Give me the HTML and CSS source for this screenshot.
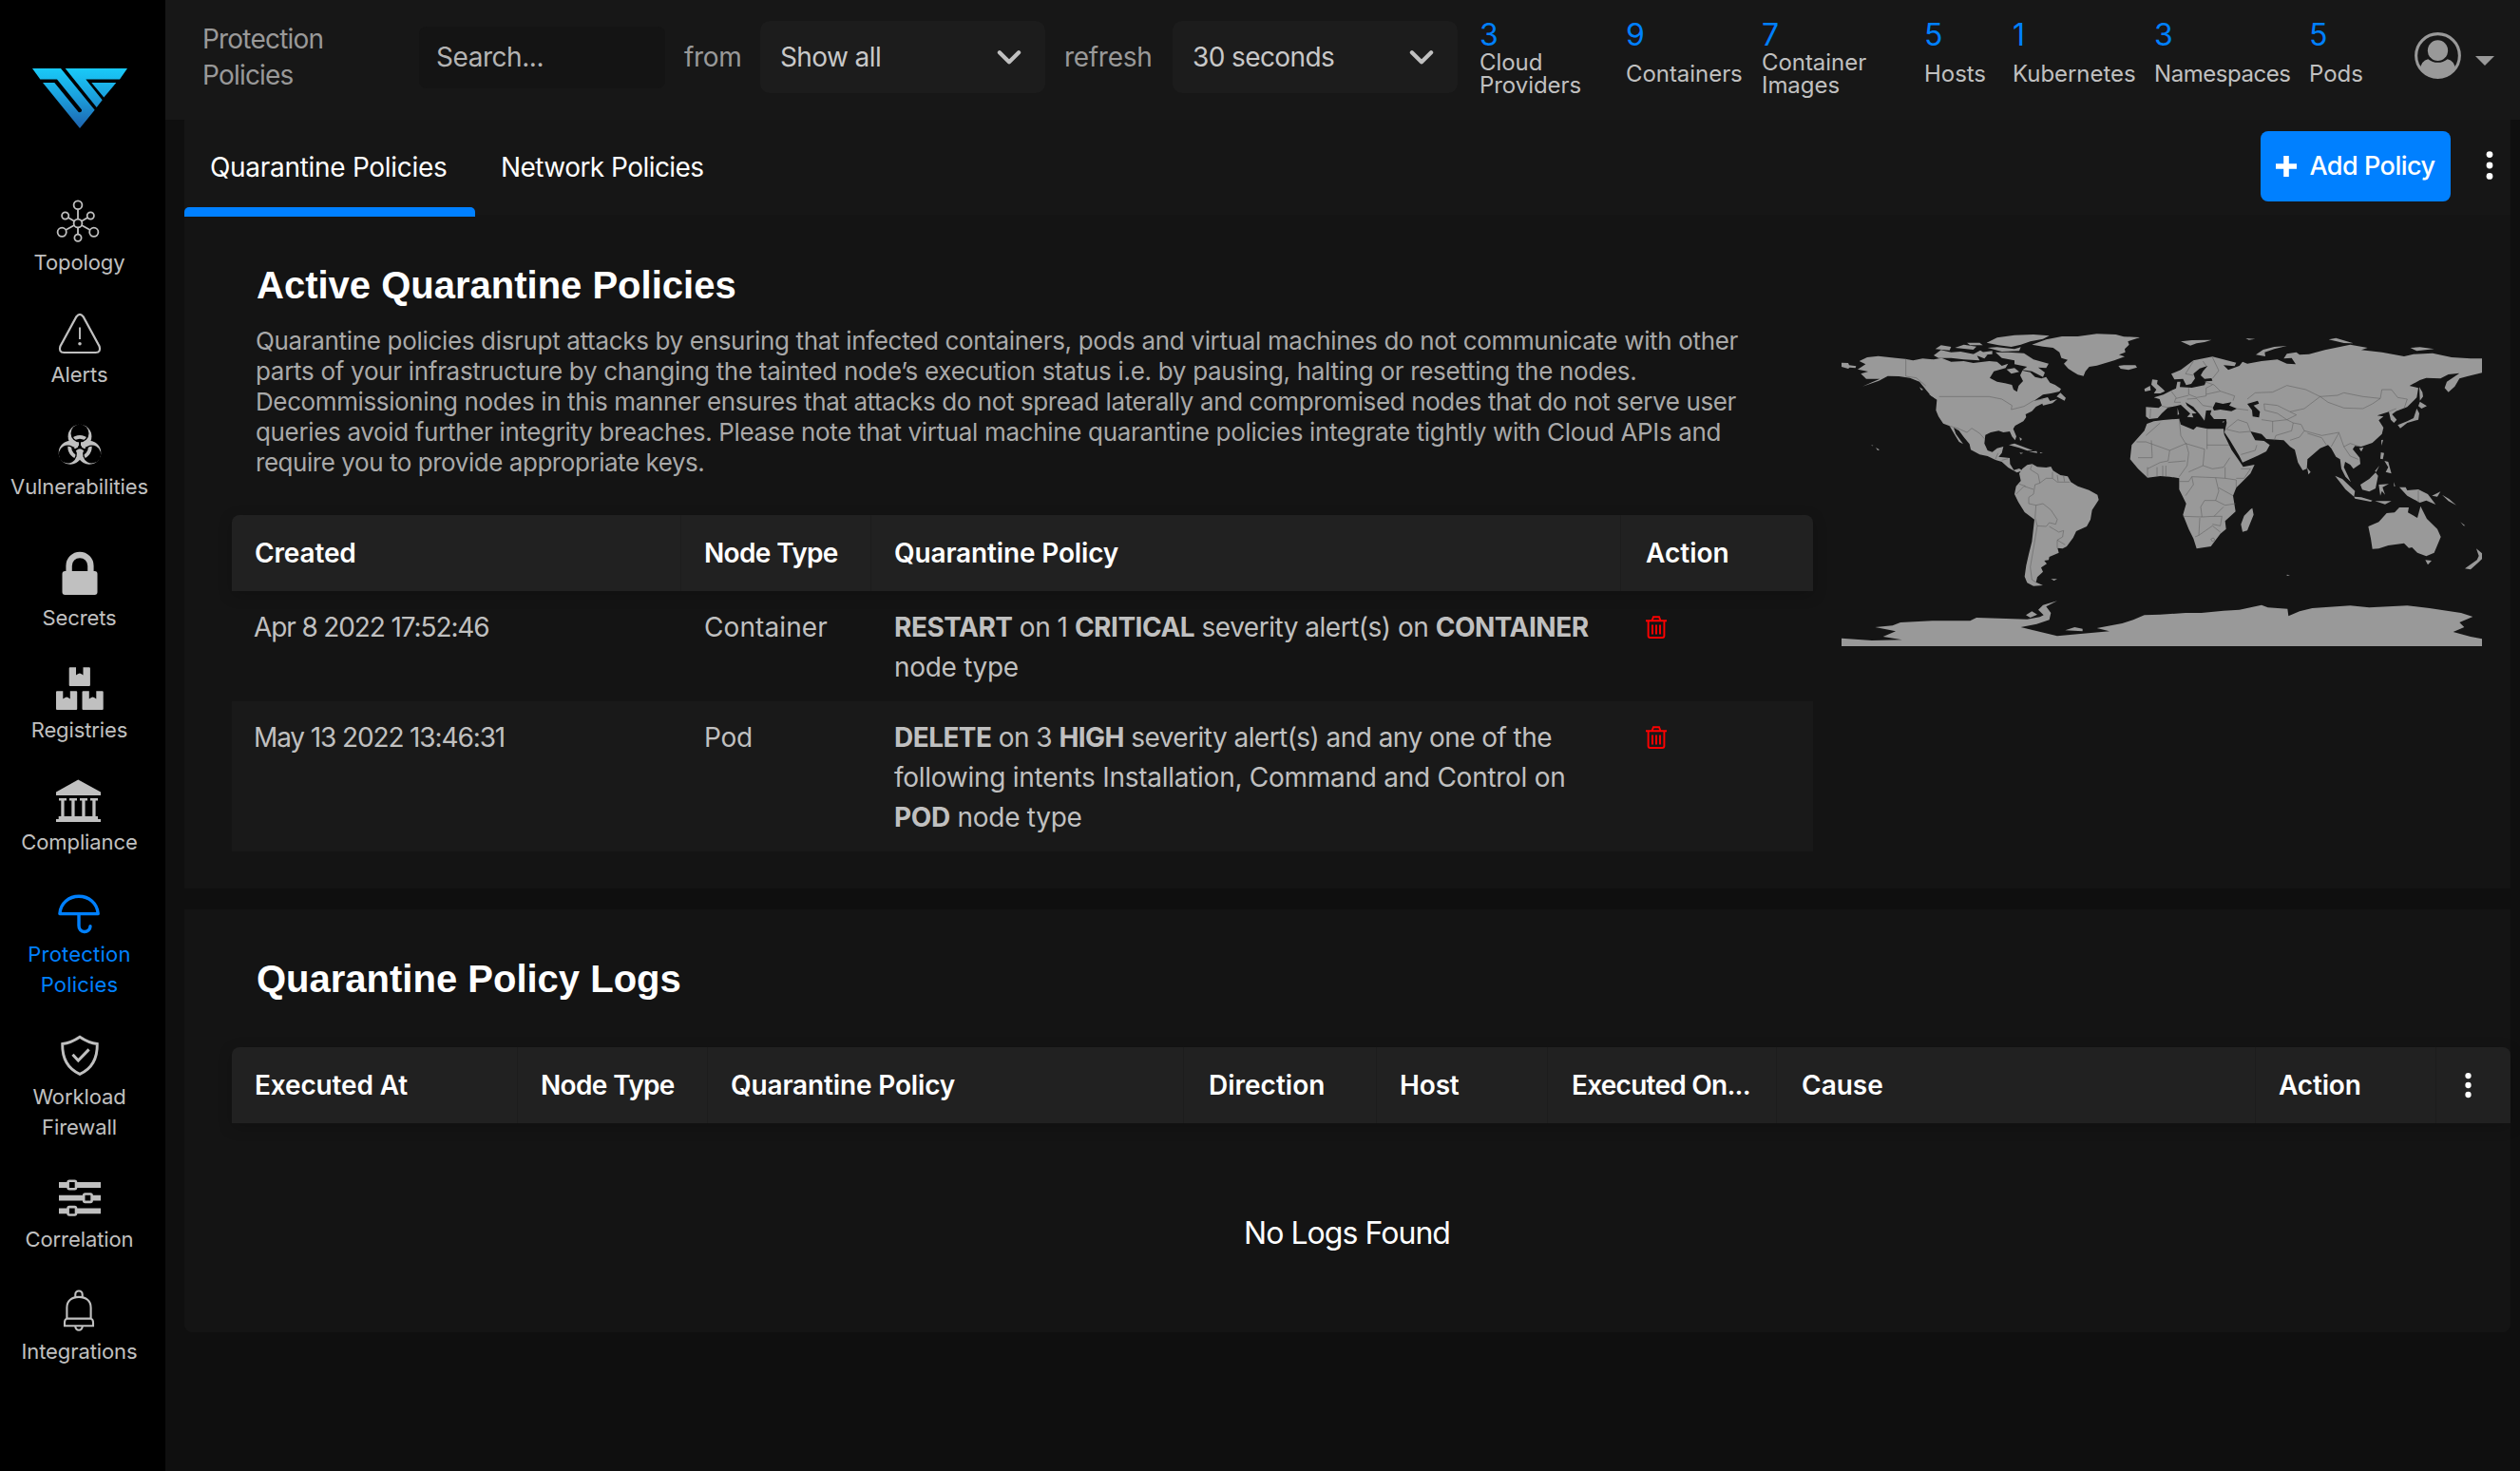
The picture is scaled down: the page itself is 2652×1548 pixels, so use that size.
FILE: index.html
```html
<!DOCTYPE html>
<html lang="en">
<head>
<meta charset="utf-8">
<title>Protection Policies</title>
<link rel="stylesheet" href="styles.css">
</head>
<body>
<div class="app">
  <nav class="sidebar">
    <svg class="logo" viewBox="102 97 300 190" preserveAspectRatio="none">
      <defs><linearGradient id="brand" gradientUnits="userSpaceOnUse" x1="0" y1="97" x2="0" y2="287"><stop offset="0" stop-color="#19caf8"/><stop offset=".45" stop-color="#1ba3df"/><stop offset="1" stop-color="#1e63ae"/></linearGradient></defs>
      <g fill="url(#brand)">
        <path d="M102 97H192L299 229L252 287L135 142H172L248 236Q259 238 258 228L180 132H127Z"/>
        <path d="M206 97H402L378 132H271L323 197L305 221Z"/>
        <path d="M289 142H367L328 189Z"/>
      </g>
    </svg>
    <a class="item"><svg class="icon" viewBox="0 0 44 44"><g fill="none" stroke="currentColor" stroke-width="1.8"><circle cx="21" cy="4.8" r="4.4"/><circle cx="21" cy="24" r="4.4"/><circle cx="7.7" cy="16" r="3.6"/><circle cx="34.3" cy="16" r="3.6"/><circle cx="4.2" cy="33.3" r="4.6"/><circle cx="37.8" cy="33.3" r="4.6"/><circle cx="21" cy="39.3" r="3.6"/><path d="M21 9.2V19.6M21 28.4V35.7M10.8 17.9L17.2 21.8M31.2 17.9L24.8 21.8M8.2 31L17.2 26M33.8 31L24.8 26"/></g></svg><span>Topology</span></a>
    <a class="item"><svg class="icon" viewBox="0 0 44 44"><path d="M18.4 4.2Q22 -.4 25.6 4.2L42.6 35.4Q44.6 41.8 38.6 42H5.4Q-.6 41.8 1.4 35.4Z" fill="none" stroke="currentColor" stroke-width="2.2"/><path d="M22 15.5V28" stroke="currentColor" stroke-width="1.9"/><circle cx="22" cy="32.8" r="1.8" fill="currentColor"/></svg><span>Alerts</span></a>
    <a class="item"><svg class="icon" viewBox="-22 -23.6 44 44">
      <defs>
        <g id="holes"><circle cy="-14.6" r="9.5"/><circle cy="-14.6" r="9.5" transform="rotate(120)"/><circle cy="-14.6" r="9.5" transform="rotate(240)"/></g>
        <clipPath id="inner"><circle cy="-14.6" r="8.2"/><circle cy="-14.6" r="8.2" transform="rotate(120)"/><circle cy="-14.6" r="8.2" transform="rotate(240)"/></clipPath>
        <mask id="cut" maskUnits="userSpaceOnUse" x="-26" y="-26" width="52" height="52"><rect x="-26" y="-26" width="52" height="52" fill="#fff"/><use href="#holes" fill="#000"/><circle r="2" fill="#000"/><path id="slit" d="M0-26V-20M0-8V0" stroke="#000" stroke-width="2"/><use href="#slit" transform="rotate(120)"/><use href="#slit" transform="rotate(240)"/></mask>
      </defs>
      <g fill="currentColor" mask="url(#cut)"><circle cy="-11.4" r="12.4"/><circle cy="-11.4" r="12.4" transform="rotate(120)"/><circle cy="-11.4" r="12.4" transform="rotate(240)"/></g>
      <circle r="10.8" fill="none" stroke="currentColor" stroke-width="3.8" clip-path="url(#inner)"/>
    </svg><span>Vulnerabilities</span></a>
    <a class="item item-split"><svg class="icon" viewBox="0 0 44 44"><rect x="3.5" y="16" width="37" height="25" rx="3" fill="currentColor"/><path d="M10.6 18V10.4a11.4 11.4 0 0 1 22.8 0V18" fill="none" stroke="currentColor" stroke-width="6.4"/></svg><span>Secrets</span></a>
    <a class="item"><svg class="icon" viewBox="0 0 44 44"><defs><path id="box" d="M1 0H7.3V8.3L9.2 7 11.2 6.2 13 7 14.8 8.3V0H21.2Q22.2 0 22.2 1V18.6Q22.2 19.6 21.2 19.6H1Q0 19.6 0 18.6V1Q0 0 1 0Z" fill="currentColor"/></defs><use href="#box" x="10.7" y="-.7"/><use href="#box" x="-3" y="24.3"/><use href="#box" x="24.5" y="24.3"/></svg><span>Registries</span></a>
    <a class="item"><svg class="icon" viewBox="0 0 44 44"><g fill="currentColor"><path d="M21.3-.6L45 12.6V16H-2V12.6Z"/><path d="M1 19h8v2.6H1zM12 19h8v2.6h-8zM23 19h8v2.6h-8zM34 19h8v2.6h-8zM3.3 21h3.3v18H3.3zM14.3 21h3.3v18h-3.3zM25.3 21h3.3v18h-3.3zM36.3 21h3.3v18h-3.3zM.7 38H42v3.4H.7zM-2 41H45v3H-2z"/></g></svg><span>Compliance</span></a>
    <a class="item item-active"><svg class="icon" viewBox="0 0 44 44"><path d="M1.9 22.6C2.6 11.5 11.5 4.2 22 4.2S41.4 11.5 42.2 22.6ZM22 22.6V35.2a6 6 0 0 0 12 .6" fill="none" stroke="currentColor" stroke-width="3.4" stroke-linecap="round" stroke-linejoin="round"/></svg><span>Protection<br>Policies</span></a>
    <a class="item"><svg class="icon" viewBox="0 0 44 44"><path d="M22 2.2Q31.5 8.6 40.3 9.5C40.6 25 34 36 22 41.3C10 36 3.4 25 3.7 9.5Q12.5 8.6 22 2.2Z" fill="none" stroke="currentColor" stroke-width="2.9"/><path d="M14.5 20.8L20.3 27L31.6 15.4" fill="none" stroke="currentColor" stroke-width="3"/></svg><span>Workload<br>Firewall</span></a>
    <a class="item"><svg class="icon" viewBox="0 0 44 44"><path d="M0 8H44M0 21.7H44M0 35.3H44" stroke="currentColor" stroke-width="5.8"/><g fill="#000" stroke="currentColor" stroke-width="2.6"><rect x="9.6" y="3.8" width="8.4" height="8.4" rx="1.4"/><rect x="26.2" y="17.5" width="8.4" height="8.4" rx="1.4"/><rect x="9.6" y="31.1" width="8.4" height="8.4" rx="1.4"/></g></svg><span>Correlation</span></a>
    <a class="item"><svg class="icon" viewBox="0 0 44 44"><g fill="none" stroke="currentColor" stroke-width="2.1"><path d="M18.3 7.9V5.2a3.7 3.7 0 0 1 7.4 0V7.9"/><path d="M9.4 30.6V19C9.4 12 14.5 7.9 22 7.9S34.6 12 34.6 19V30.6"/><path d="M9.4 30.6H34.6Q37 31.6 37 34.5V38.2H7V34.5Q7 31.6 9.4 30.6Z"/><path d="M18.2 38.6q.6 4.2 3.8 4.2t3.8-4.2"/></g></svg><span>Integrations</span></a>
  </nav>

  <div class="main">
    <header class="topbar">
      <div class="crumb">Protection<br>Policies</div>
      <div class="search">Search...</div>
      <div class="hint">from</div>
      <div class="select"><span>Show all</span><svg viewBox="0 0 24 16"><path d="M2.5 3L12 12.5L21.5 3"/></svg></div>
      <div class="hint hint-refresh">refresh</div>
      <div class="select"><span>30 seconds</span><svg viewBox="0 0 24 16"><path d="M2.5 3L12 12.5L21.5 3"/></svg></div>
      <div class="stats">
        <div class="stat"><b>3</b><span>Cloud<br>Providers</span></div>
        <div class="stat"><b>9</b><span>Containers</span></div>
        <div class="stat"><b>7</b><span>Container<br>Images</span></div>
        <div class="stat"><b>5</b><span>Hosts</span></div>
        <div class="stat"><b>1</b><span>Kubernetes</span></div>
        <div class="stat"><b>3</b><span class="wide">Namespaces</span></div>
        <div class="stat"><b>5</b><span>Pods</span></div>
      </div>
      <div class="user">
        <svg class="avatar" viewBox="0 0 48 48"><defs><clipPath id="disc"><circle cx="24" cy="24" r="23"/></clipPath></defs><circle cx="24" cy="24" r="22.4" fill="none" stroke="#999" stroke-width="3"/><g clip-path="url(#disc)" fill="#999"><ellipse cx="24" cy="18.8" rx="10.4" ry="10.6"/><path d="M5 50V40Q7 28.5 14 27.6Q18.5 31.2 24 31.2T34 27.6Q41 28.5 43 40V50Z"/></g></svg>
        <i class="caret"></i>
      </div>
    </header>

    <div class="content">
      <div class="tabs">
        <a class="tab tab-on">Quarantine Policies</a>
        <a class="tab tab-net">Network Policies</a>
        <div class="tab-actions">
          <button class="add"><svg viewBox="0 0 22 22"><path d="M11 0V22M0 11H22"/></svg>Add Policy</button>
          <svg class="dots" viewBox="0 0 8 32"><circle cx="4" cy="4.6" r="3.4"/><circle cx="4" cy="16" r="3.4"/><circle cx="4" cy="27.4" r="3.4"/></svg>
        </div>
      </div>

      <section class="panel policies">
        <div class="policies-main">
          <h2>Active Quarantine Policies</h2>
          <p class="intro"><span class="l1">Quarantine policies disrupt attacks by ensuring that infected containers, pods and virtual machines do not communicate with other</span><br><span class="l2">parts of your infrastructure by changing the tainted node’s execution status i.e. by pausing, halting or resetting the nodes.</span><br><span class="l3">Decommissioning nodes in this manner ensures that attacks do not spread laterally and compromised nodes that do not serve user</span><br><span class="l4">queries avoid further integrity breaches. Please note that virtual machine quarantine policies integrate tightly with Cloud APIs and</span><br><span class="l5">require you to provide appropriate keys.</span></p>
          <div class="table">
            <div class="row head"><div>Created</div><div class="snug">Node Type</div><div>Quarantine Policy</div><div class="action">Action</div></div>
            <div class="row"><div class="date">Apr 8 2022 17:52:46</div><div class="kind">Container</div><div><span class="r1"><b>RESTART</b> on 1 <b>CRITICAL</b> severity alert(s) on <b>CONTAINER</b></span><br>node type</div><div><svg class="trash" viewBox="0 0 22 24"><path d="M0 5.2H22M6.5 5L8 1.2H14L15.5 5M2.6 5V21Q2.6 23 4.6 23H17.4Q19.4 23 19.4 21V5M7 9.5V19.5M11 9.5V19.5M15 9.5V19.5"/></svg></div></div>
            <div class="row alt"><div class="date">May 13 2022 13:46:31</div><div>Pod</div><div><span class="r2"><b>DELETE</b> on 3 <b>HIGH</b> severity alert(s) and any one of the</span><br><span class="r3">following intents Installation, Command and Control on</span><br><b>POD</b> node type</div><div><svg class="trash" viewBox="0 0 22 24"><path d="M0 5.2H22M6.5 5L8 1.2H14L15.5 5M2.6 5V21Q2.6 23 4.6 23H17.4Q19.4 23 19.4 21V5M7 9.5V19.5M11 9.5V19.5M15 9.5V19.5"/></svg></div></div>
          </div>
        </div>

        <svg class="map" viewBox="54 60 2022 990">
          <g class="land">
            <path d="M54 155L75 156 78 163 100 166 98 172 80 170 75 174 54 168Z"/>
            <path d="M110 150L135 138 170 134 225 140 255 143 280 148 310 142 345 145 370 140 400 152 440 150 470 156 520 150 545 152 560 165 580 158 572 172 535 182 522 203 545 215 570 220 592 225 597 240 608 247 613 228 627 213 618 195 625 180 650 185 665 200 685 205 700 200 712 218 728 225 747 238 742 246 715 252 690 256 662 275 705 264 712 276 735 270 720 283 690 290 688 284 668 294 655 308 635 318 637 327 628 340 602 354 596 364 606 388 602 400 592 388 585 372 565 375 550 370 525 375 508 383 505 410 515 432 530 437 545 425 565 420 560 440 550 452 585 456 586 475 598 494 615 489 625 496 608 502 580 486 560 468 540 462 515 450 490 445 462 430 458 412 440 390 425 370 408 360 415 380 438 412 425 405 410 380 395 355 375 347 360 325 352 305 355 272 335 258 320 240 300 215 270 203 235 198 200 197 172 212 120 230 150 217 175 206 132 206 115 190 138 183 105 176 130 160Z"/>
            <path d="M345 132L368 115 400 122 430 120 480 130 490 148 440 145 400 140 360 140ZM350 112L368 100 400 105 395 116ZM412 108L440 98 480 104 470 114ZM450 92L490 92 500 100 460 100ZM470 128L492 116 515 130 505 142ZM515 108L545 106 600 112 620 106 615 118 560 120ZM512 92L545 76 600 68 660 66 710 70 690 80 650 88 620 98 590 105 550 100ZM540 122L580 122 630 125 660 145 708 158 700 172 675 170 696 186 690 200 655 182 625 178 640 168 600 160 600 148 560 140ZM575 176L600 172 615 184 590 190ZM495 122L530 118 530 128 505 130Z"/>
            <path d="M655 98L700 82 750 72 800 72 860 64 920 66 945 73 996 75 958 88 962 98 948 112 950 122 930 130 948 136 915 148 880 158 860 164 836 168 824 182 818 197 800 193 785 184 770 174 756 158 768 146 748 140 742 122 722 108 690 104Z"/>
            <path d="M928 165L945 163 982 163 987 170 960 178 935 174ZM733 262L745 250 762 266 758 275ZM665 258L690 252 680 262ZM300 232L312 240 306 242ZM330 255L345 258 362 270 350 268ZM582 415L600 410 640 425 658 432 640 433 615 424ZM645 436L670 434 672 440ZM616 439L628 440 620 443ZM680 438L690 439 682 441ZM616 390L624 396 618 402ZM148 415L155 417 150 418ZM162 423L174 430 168 432ZM715 838L735 838 725 843ZM636 952L655 940 672 950 650 960Z"/>
            <path d="M615 505L625 490 640 478 656 475 672 484 700 486 715 483 722 496 745 510 768 514 778 532 800 545 835 557 862 572 866 588 845 620 840 650 828 672 795 687 785 708 765 735 752 742 736 740 740 755 710 768 708 778 694 780 702 790 684 802 690 815 672 832 668 848 690 858 660 860 640 850 632 830 637 795 645 760 655 720 663 650 632 627 612 595 600 570 605 545 620 528Z"/>
            <path d="M54 1025L150 1032 245 1030 185 1020 225 1003 195 997 160 990 215 985 240 975 340 970 460 970 480 960 550 962 640 965 680 958 692 952 675 935 690 920 735 907 700 925 715 945 710 967 670 980 620 990 660 1000 735 1018 800 1012 900 1003 860 993 940 978 975 967 1010 952 1060 950 1140 945 1190 945 1260 938 1310 935 1380 920 1400 928 1462 932 1465 955 1500 940 1540 930 1660 922 1720 928 1840 922 1910 930 2010 945 2047 957 2005 975 2020 990 1985 1005 2040 1020 2076 1027V1050H54ZM760 1000L790 990 815 995 815 1003Z"/>
          </g>
          <g class="land" transform="translate(960 0)">
            <path d="M55 295L95 298 105 290 98 270 80 265 95 260 110 256 135 243 150 236 154 215 164 215 162 232 200 234 240 226 245 214 265 212 262 204 240 206 228 195 235 182 250 165 225 173 205 190 210 205 198 222 182 226 172 206 145 208 135 190 165 178 205 148 265 136 300 145 340 155 335 166 300 163 315 178 350 165 360 152 375 158 420 150 470 145 500 158 528 160 515 140 490 142 500 127 530 122 540 130 570 128 620 115 700 98 755 108 735 115 800 122 870 135 900 128 960 125 1020 138 1080 142 1116 142V187L1070 198 1045 205 1030 230 1010 248 998 235 1005 215 1045 188 1010 192 985 205 940 203 920 210 887 228 915 235 910 265 880 295 845 308 832 318 847 335 838 345 828 335 822 310 785 322 805 325 790 337 805 360 800 380 770 408 735 420 715 418 708 428 730 455 732 475 710 490 700 477 684 468 680 485 702 532 685 515 672 490 668 460 655 452 640 425 630 415 605 425 565 460 563 490 550 495 535 470 525 430 510 420 490 400 435 396 420 380 385 372 400 400 428 402 446 415 435 435 410 448 360 470 350 450 320 400 303 375 310 345 308 333 270 333 258 318 262 305 245 306 240 338 225 318 205 295 180 280 185 290 215 315 200 316 205 328 185 326 195 316 165 288 150 292 125 296 105 315 92 330 65 333 55 325Z"/>
            <path d="M80 340L110 336 160 332 165 350 205 367 215 357 250 364 300 364 302 382 325 430 350 466 362 484 398 477 385 505 340 550 330 575 338 625 305 655 308 680 290 695 260 735 215 742 205 710 190 680 172 635 182 600 160 555 160 520 130 515 100 513 60 518 30 490 5 460 10 415 50 370 58 348Z"/>
            <path d="M75 208L92 210 90 222 108 238 115 245 100 252 80 252 88 240 72 224ZM50 238L68 228 70 242 52 246ZM385 618L391 614 395 635 375 685 360 689 355 665 365 638ZM564 487L575 500 568 508ZM918 232L928 248 930 262 920 275ZM920 278L942 292 925 300 915 292ZM910 300L918 315 915 335 880 345 858 362 850 352 880 340 900 330ZM798 400L804 398 799 417ZM728 425L742 422 735 436ZM652 512L675 522 715 560 712 578 685 555ZM712 578L735 580 770 590 765 594 715 584ZM732 540L760 522 780 502 788 512 780 552 760 562 738 556ZM790 540L822 538 802 548 810 572 800 560 795 575ZM797 438L807 440 803 460 795 458ZM808 465L820 468 830 505 812 500 820 485ZM778 497L792 480 782 500ZM778 592L830 592 810 602ZM838 532L842 545 838 545ZM855 548L875 548 880 558 915 555 945 570 970 603 940 590 920 597 880 575ZM958 575L985 562 975 578ZM990 572L1012 585 1035 605 1010 592ZM1048 658L1063 670 1058 670ZM1062 628L1068 638ZM757 672L790 658 815 630 840 628 855 612 885 612 882 628 912 645 922 608 942 648 975 680 986 705 965 755 940 766 912 755 895 738 885 740 870 725 820 732 790 742 770 743 765 710ZM937 778L957 780 945 793ZM1098 742L1116 757V775L1105 785 1080 808 1062 805 1100 778 1106 765ZM165 88L200 84 262 83 240 90 215 94 195 101ZM370 78L400 80 380 83ZM402 130L425 114 460 105 500 102 460 112 430 122 432 135ZM632 82L655 77 710 94 680 93ZM890 108L920 106 965 112 910 118ZM0 74L35 76 0 82ZM500 824L510 826 500 828ZM155 298L160 318 155 320ZM255 342L265 342ZM295 342L303 339 300 344Z"/>
          </g>
          <g class="sea" transform="translate(960 0)">
            <path d="M266 298L275 280 298 285 325 280 318 290 342 300 325 308 290 303 270 306ZM375 285L408 275 412 284 395 290 415 310 412 328 392 325 390 305Z"/>
          </g>
          <g class="borders">
            <path d="M257 143V198L290 203 320 228M362 262H520L560 270 592 290 590 303 630 293 660 275 690 270M395 355L420 362 450 375 465 362 490 378 505 395M540 460L548 440M560 463L580 458M655 478L650 492 675 508 680 535 665 540 660 570 645 580 645 600 668 605 665 645 672 670 662 730 650 800 655 840 670 850M680 535L700 520 720 520 720 500M735 510L738 530M755 512L758 530M720 520L735 532 775 532M605 570L630 545 660 555M615 538L635 545M668 605L690 600 715 620 735 650 730 665 710 660 700 672 672 670M710 672L740 690 755 685 752 705 735 715 735 740M735 715L760 730"/>
            <g transform="translate(960 0)"><path d="M70 300L68 330M105 292L130 298M135 245L150 265 145 280 165 280M190 235L190 255 215 265 245 260 245 235 265 225M150 268L190 258M185 270L215 268 235 290 265 295M245 255L290 245 335 260 330 275M205 195L180 190 205 150M245 165L235 150M265 138L285 180 265 205M240 215L270 225 290 245M340 300L378 305M375 270L400 250 455 248 500 227 560 240 605 262 555 300 510 310 470 290 428 285 430 305M605 262L660 258 680 250 740 262 795 268 770 285 740 300 680 298 630 280 605 262M795 268L800 240 830 240 850 265 880 270 870 300M430 305L470 315 500 335 530 320 510 310M420 335L455 340 500 335 520 345 515 370 465 385 460 400M455 340V375M520 345L545 350 555 370 610 385 665 375 640 420M555 370L540 390 510 400M565 378L610 392 625 415M665 378L680 420 700 410 730 420M680 420L700 450 725 460M308 365L345 335 375 345 385 372M308 365L350 375 385 372M355 445L400 432 405 415M820 310L845 300M915 558V597"/>
            <path d="M160 332L165 385 180 410 240 428M248 362V428M248 415H318M240 428L235 480 190 500M25 405H55L130 432 182 410M72 400L75 455 30 455M100 345L55 385M130 432L125 465 100 470 60 490M160 515L185 480 190 440 182 410M235 480L265 490 300 485 320 455M125 470L180 465M60 485V515M90 485V513M108 480V513M118 480V513M160 530H190L200 515 275 518 285 560 275 590 240 590 228 610 232 642 172 640M200 515L205 540 180 575M275 518L305 520 305 485M305 520L340 525 340 550M285 550L330 575M275 590L305 605 338 600M232 642L270 640 300 610M225 645L222 700 210 705M222 700L265 670 290 690M270 640L295 640 290 670 265 665M355 490L385 490 365 520 340 520M260 712L268 708 273 715 265 720Z"/></g>
          </g>
        </svg>
      </section>

      <section class="panel logs">
        <h2>Quarantine Policy Logs</h2>
        <div class="log-head"><div>Executed At</div><div class="snug">Node Type</div><div>Quarantine Policy</div><div class="action">Direction</div><div>Host</div><div class="cut">Executed On...</div><div class="action">Cause</div><div>Action</div><div class="menu"><svg class="dots small" viewBox="0 0 8 32"><circle cx="4" cy="4.6" r="3.6"/><circle cx="4" cy="16" r="3.6"/><circle cx="4" cy="27.4" r="3.6"/></svg></div></div>
        <div class="empty">No Logs Found</div>
      </section>
    </div>
  </div>
</div>
</body>
</html>
```
FILE: styles.css
```css
* { box-sizing: border-box; }
body { margin: 0; background: #0f0f0f; color: #c0c0c0; font: 400 28px/42px Inter, "Noto Sans", sans-serif; letter-spacing: -.3px; white-space: nowrap; }
.app { display: flex; width: 2652px; height: 1548px; overflow: hidden; }

.sidebar { width: 174px; flex: none; background: #000; padding: 72px 7px 0 0; display: flex; flex-direction: column; align-items: center; }
.logo { width: 100px; height: 63px; margin-bottom: 76px; flex: none; }
.item { display: flex; flex-direction: column; align-items: center; gap: 5px; margin-bottom: 37px; font-size: 22px; line-height: 32px; letter-spacing: -.1px; text-align: center; color: #c0c0c0; }
.item-split { margin-top: 20px; }
.item-active { color: #0080ff; }
.item-active span { letter-spacing: .2px; }
.icon { width: 44px; height: 44px; overflow: visible; display: block; }

.main { flex: 1; min-width: 0; }
.topbar { height: 126px; background: #171717; padding: 0 27px 6px 39px; display: flex; align-items: center; }
.crumb { width: 228px; line-height: 38px; color: #999; letter-spacing: -.8px; }
.search { width: 259px; height: 65px; line-height: 65px; padding-left: 18px; background: #141414; border-radius: 8px; letter-spacing: -.45px; color: #b4b4b4; margin-right: 20px; }
.hint { width: 80px; color: #999; letter-spacing: -.3px; }
.hint-refresh { width: 114px; margin-left: 20px; }
.select { width: 300px; height: 76px; padding: 0 25px 0 21px; background: #1c1c1c; border-radius: 10px; display: flex; align-items: center; justify-content: space-between; color: #c8c8c8; letter-spacing: -.6px; }
.select svg { width: 26px; height: 17px; }
.select path { fill: none; stroke: #c0c0c0; stroke-width: 4; stroke-linecap: round; stroke-linejoin: round; }
.stats { display: grid; grid-template-columns: 154px 143px 171px 93px 149px 163px 90px; margin-left: 23px; padding-top: 17px; align-self: flex-start; }
.stat b { display: block; font-weight: 400; font-size: 32px; line-height: 40px; color: #0080ff; }
.stat span { display: flex; align-items: center; height: 42px; font-size: 24px; line-height: 24px; letter-spacing: -.05px; }
.stat .wide { letter-spacing: -.45px; }
.user { margin-left: auto; display: flex; align-items: center; gap: 15px; }
.avatar { width: 49px; height: 49px; margin-top: -4px; }
.caret { border: 10px solid transparent; border-top-color: #999; border-bottom: 0; margin-top: 8px; }

.content { padding: 0 10px 0 20px; }
.tabs { height: 100px; background: #161616; display: flex; align-items: stretch; color: #fff; }
.tab { display: flex; align-items: center; padding: 0 27px; letter-spacing: -.3px; }
.tab-net { letter-spacing: -.55px; }
.tab-on { width: 306px; position: relative; }
.tab-on::after { content: ""; position: absolute; left: 0; right: 0; bottom: -2px; height: 10px; background: #0080ff; border-radius: 5px 5px 0 0; }
.tab-actions { margin-left: auto; display: flex; align-items: center; gap: 37px; padding: 0 18px 2px 0; }
.add { width: 200px; height: 74px; border: 0; border-radius: 8px; background: #0080ff; color: #fff; font: 500 27px/74px Inter, sans-serif; letter-spacing: -.5px; padding: 0; display: flex; align-items: center; justify-content: center; gap: 13px; }
.add svg { width: 22px; height: 22px; }
.add path { stroke: #fff; stroke-width: 5.6; }
.dots { width: 8px; height: 32px; margin-top: -3px; fill: #fff; }
.dots.small { width: 7px; height: 28px; margin-top: -1px; }

.panel { background: #141414; }
h2 { margin: 0; font: 700 40px/48px "Liberation Sans", Arial, sans-serif; letter-spacing: 0; color: #fff; }
.policies { height: 709px; padding: 50px 30px 0 50px; display: flex; justify-content: space-between; margin-bottom: 22px; }
.policies-main { width: 1664px; }
.policies h2, .logs h2 { padding-left: 26px; }
.intro { margin: 19px 0 39px; padding-left: 25px; font-size: 26px; line-height: 32px; color: #a9a9a9; letter-spacing: -.33px; }
.l2 { letter-spacing: -.3px; }
.l3 { letter-spacing: -.39px; }
.l4 { letter-spacing: -.34px; }
.l5 { letter-spacing: -.45px; }
.row { display: grid; grid-template-columns: 473px 200px 789px 202px; }
.row > div { padding: 17px 0 15px 24px; }
.row > .date { letter-spacing: -1.12px; padding-left: 23px; }
.kind { letter-spacing: .1px; }
.r1 { letter-spacing: -.49px; }
.r2 { letter-spacing: -.55px; }
.r3 { letter-spacing: -.27px; }
.alt { background: #191919; }
.row.head, .log-head { height: 80px; background: #212121; border-radius: 8px 8px 0 0; color: #fff; font-weight: 600; letter-spacing: -.15px; box-shadow: 0 4px 16px rgba(0, 0, 0, .2); }
.row.head > div, .log-head > div { padding: 0 0 0 24px; line-height: 80px; border-right: 1px solid #1d1d1d; }
.row.head > .action, .log-head > .action { padding-left: 26px; letter-spacing: 0; }
.snug { letter-spacing: -.65px; }
.log-head > .cut { letter-spacing: -.75px; padding-left: 25px; }
.row.head > div:last-child, .log-head > div:last-child { border-right: 0; }
.trash { width: 22px; height: 24px; display: block; margin: 9px 0 0 2px; overflow: visible; }
.trash path { fill: none; stroke: #f00; stroke-width: 1.9; }
.map { width: 674px; height: 330px; margin-top: 74px; }
.land { fill: #999; }
.sea { fill: #141414; }
.borders { fill: none; stroke: #5c5c5c; stroke-width: 1.6; stroke-linejoin: round; }

.logs { height: 445px; padding: 49px 0 0 50px; border-radius: 0 0 8px 8px; }
.logs h2 { margin-bottom: 48px; }
.log-head { display: grid; grid-template-columns: 301px 200px 501px 203px 180px 241px 504px 190px 78px; }
.log-head > .menu { display: flex; align-items: center; padding-left: 30px; }
.empty { height: 231px; line-height: 231px; text-align: center; color: #fff; font-size: 32px; letter-spacing: -.95px; padding-right: 51px; }
```
